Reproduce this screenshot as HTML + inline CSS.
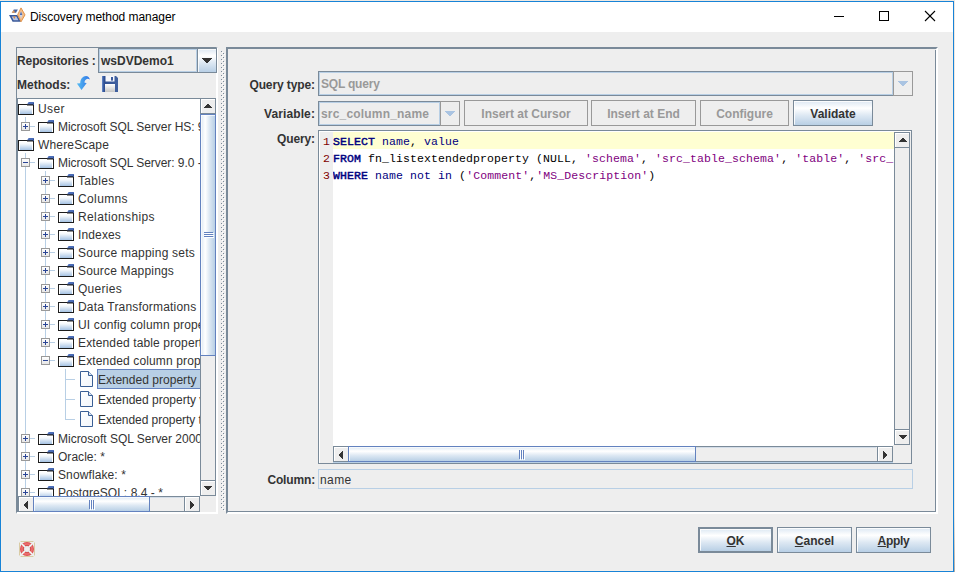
<!DOCTYPE html><html><head><meta charset="utf-8"><title>Discovery method manager</title><style>
*{box-sizing:border-box;margin:0;padding:0}
html,body{width:955px;height:572px;overflow:hidden;background:#eeeeee}
body{position:relative;font-family:"Liberation Sans",sans-serif;font-size:12px;color:#333;line-height:15px}
.a{position:absolute}
.b{font-weight:bold}
.t{position:absolute;white-space:nowrap;height:15px;line-height:15px;margin-top:1px}
.btn{position:absolute;border:1px solid #7a8a99;background:linear-gradient(to bottom,#dde8f3 0%,#ffffff 30%,#dde8f3 60%,#b8cfe5 100%);text-align:center;font-weight:bold;color:#333;white-space:nowrap;padding-top:1px}
.btn.dis{background:#eeeeee;color:#999;border-color:#999}
.btn:after{content:"";position:absolute;left:0;top:0;right:0;bottom:0;border:1px solid #fff;border-right-color:transparent;border-bottom-color:transparent;opacity:.9}
.btn.dis:after{display:none}
.thumbv{position:absolute;border:1px solid #6382bf;background:linear-gradient(to right,#dde8f3 0%,#ffffff 30%,#dde8f3 60%,#b8cfe5 100%)}
.thumbh{position:absolute;border:1px solid #6382bf;background:linear-gradient(to bottom,#dde8f3 0%,#ffffff 30%,#dde8f3 60%,#b8cfe5 100%)}
.row{position:absolute;left:0;white-space:nowrap;height:18px}
.code{font-family:"Liberation Mono",monospace;font-size:11.5px;letter-spacing:0.1px;white-space:pre;position:absolute;height:17px;line-height:17px;color:#000}
.kw{color:#000080;-webkit-text-stroke:0.45px #000080}
.nv{color:#000080}
.st{color:#800080}
</style></head><body>
<div class="a" style="left:0;top:0;width:955px;height:1px;background:#efe9e2"></div>
<div class="a" style="left:954px;top:0;width:1px;height:572px;background:linear-gradient(to bottom,#efe7df 0%,#efe7df 90%,#b4aca4 100%)"></div>
<div class="a" style="left:0;top:1px;width:954px;height:571px;border:1px solid #1883d7;border-top:1px solid #1883d7"></div>
<div class="a" style="left:1px;top:32px;width:1px;height:539px;background:#f5f0ea;"></div>
<div class="a" style="left:952px;top:32px;width:1px;height:539px;background:#f5f0ea;"></div>
<div class="a" style="left:1px;top:570px;width:952px;height:1px;background:#f5f0ea;"></div>
<div class="a" style="left:1px;top:2px;width:952px;height:30px;background:#fff"></div>
<svg class="a" style="left:8px;top:7px" width="18" height="16" viewBox="8 7 18 16">
<polygon points="9,14.9 17.3,14.9 21,21.8 12.6,21.8" fill="#3b5a9a"/>
<polygon points="11.6,16.4 16.4,16.4 18.4,20.3 13.6,20.3" fill="#b4c4e8"/>
<polygon points="13,16.6 15.6,16.6 14.4,19" fill="#e08a3a"/>
<polygon points="13.8,9.6 17.9,9.6 16,12.8 12,12.8" fill="#46629f"/>
<polygon points="11.6,12.8 15,12.8 13.9,9.9" fill="#e59a55"/>
<polygon points="21,7.9 25,14.9 21,21.8 17.6,14.9" fill="#f1bd8c" stroke="#e08a3a" stroke-width="0.9"/>
<polygon points="21,11.6 22.3,14.9 21,18.6 19.8,14.9" fill="#c9d6ef"/>
<polygon points="21,11.6 22.3,14.9 19.8,14.9" fill="#4f6cb0"/>
</svg>
<div class="t" style="left:30px;top:9px;color:#000;font-size:12px;letter-spacing:-0.05px" id="title">Discovery method manager</div>
<svg class="a" style="left:826px;top:8px" width="120" height="18" viewBox="0 0 120 18" shape-rendering="crispEdges">
<rect x="8" y="8" width="10" height="1" fill="#000"/>
<rect x="53.5" y="3.5" width="9" height="9" fill="none" stroke="#000" stroke-width="1"/>
<g shape-rendering="auto" stroke="#000" stroke-width="1.1"><line x1="99" y1="3" x2="109" y2="13"/><line x1="109" y1="3" x2="99" y2="13"/></g>
</svg>
<div class="a" style="left:16px;top:47px;width:202px;height:467px;border-left:1px solid #7a8a99;border-top:1px solid #7a8a99;border-right:2px solid #fff;border-bottom:2px solid #fff"></div>
<div class="t b" style="left:17px;top:53px;letter-spacing:-0.1px">Repositories :</div>
<div class="a" style="left:98px;top:48px;width:119px;height:25px;border:1px solid #7a8a99;background:#eeeeee"></div>
<div class="a" style="left:99px;top:49px;width:98px;height:23px;border:1px solid #b8cfe5"></div>
<div class="a" style="left:197px;top:49px;width:19px;height:23px;border-left:1px solid #7a8a99;background:linear-gradient(to bottom,#dde8f3 0%,#ffffff 30%,#dde8f3 60%,#b8cfe5 100%)"></div>
<div class="a" style="left:198px;top:49px;width:18px;height:23px;border-left:1px solid #fff;border-top:1px solid #fff;opacity:.8"></div>
<div class="t b" style="left:101px;top:53px;color:#333;letter-spacing:0.000px">wsDVDemo1</div>
<svg class="a" style="left:202px;top:58px" width="10" height="5" shape-rendering="crispEdges"><path d="M0,0h10v1h-10zM1,1h8v1h-8zM2,2h6v1h-6zM3,3h4v1h-4zM4,4h2v1h-2z" fill="#333"/></svg>
<div class="t b" style="left:17px;top:77px">Methods:</div>
<svg class="a" style="left:76px;top:75px" width="15" height="16" viewBox="0 0 15 16">
<defs><linearGradient id="ug" x1="0" y1="0" x2="1" y2="0"><stop offset="0" stop-color="#56bdf2"/><stop offset="1" stop-color="#2f74e6"/></linearGradient></defs>
<path d="M0.9,8.5 L4.2,8.2 C4.2,4 7,1 10,1 C12,1 13.5,2.6 13.9,4.6 C12.5,3.6 11,3.6 10,4.4 C8.8,5.4 8.4,6.6 8.6,7.8 L10.7,7.9 L5.5,15.1 Z" fill="url(#ug)"/>
</svg>
<svg class="a" style="left:102px;top:76px" width="16" height="16" viewBox="0 0 16 16">
<defs><linearGradient id="sg" x1="0" y1="0" x2="1" y2="0"><stop offset="0" stop-color="#6b8fd0"/><stop offset="0.12" stop-color="#2f4f92"/><stop offset="1" stop-color="#41619f"/></linearGradient>
<linearGradient id="sl" x1="0" y1="0" x2="0" y2="1"><stop offset="0" stop-color="#ffffff"/><stop offset="1" stop-color="#c4c4c4"/></linearGradient></defs>
<polygon points="0,0 14,0 16,2 16,16 0,16" fill="url(#sg)"/>
<rect x="3.5" y="0" width="9" height="5.5" fill="#f6f7fb"/>
<rect x="9" y="1" width="2" height="3.6" fill="#3a5a9c"/>
<rect x="3" y="8" width="10" height="8" fill="url(#sl)"/>
</svg>
<div class="a" style="left:17px;top:98px;width:199px;height:414px;border:1px solid #7a8a99;background:#fff"></div>
<div class="a" id="tree" style="left:18px;top:99px;width:182px;height:397px;overflow:hidden;background:#fff">
<svg class="a" style="left:0px;top:3px" width="16" height="13" viewBox="0 0 16 13"><defs><linearGradient id="fg1" x1="0" y1="0" x2="0" y2="1"><stop offset="0" stop-color="#ffffff"/><stop offset="0.25" stop-color="#f4f8fc"/><stop offset="1" stop-color="#a6c3e4"/></linearGradient></defs>
<rect x="0.5" y="2.5" width="15" height="10" fill="#fff" stroke="#1c1c1c" stroke-width="1"/>
<rect x="2" y="4" width="12" height="8" fill="url(#fg1)"/>
<polygon points="10.6,0 16,0 16,2.6 9,2.6" fill="#4a6db8"/>
<rect x="9" y="2.6" width="7" height="0.9" fill="#1c1c1c"/>
<rect x="15" y="1" width="1" height="2" fill="#33508f"/>
</svg>
<div class="t" style="left:20px;top:2px;letter-spacing:0.416px">User</div>
<svg class="a" style="left:20px;top:21px" width="16" height="13" viewBox="0 0 16 13"><defs><linearGradient id="fg2" x1="0" y1="0" x2="0" y2="1"><stop offset="0" stop-color="#ffffff"/><stop offset="0.25" stop-color="#f4f8fc"/><stop offset="1" stop-color="#a6c3e4"/></linearGradient></defs>
<rect x="0.5" y="2.5" width="15" height="10" fill="#fff" stroke="#1c1c1c" stroke-width="1"/>
<rect x="2" y="4" width="12" height="8" fill="url(#fg2)"/>
<polygon points="10.6,0 16,0 16,2.6 9,2.6" fill="#4a6db8"/>
<rect x="9" y="2.6" width="7" height="0.9" fill="#1c1c1c"/>
<rect x="15" y="1" width="1" height="2" fill="#33508f"/>
</svg>
<div class="a" style="left:3px;top:23px;width:9px;height:9px;border:1px solid #999;background:linear-gradient(to bottom,#ffffff,#e6e6e6)"></div><div class="a" style="left:5px;top:27px;width:5px;height:1px;background:#2a4596"></div><div class="a" style="left:7px;top:25px;width:1px;height:5px;background:#2a4596"></div>
<div class="a" style="left:12px;top:27px;width:5px;height:1px;background:#b8cfe5"></div>
<div class="t" style="left:40px;top:20px;letter-spacing:-0.043px">Microsoft SQL Server HS: 9.0 - *</div>
<svg class="a" style="left:0px;top:39px" width="16" height="13" viewBox="0 0 16 13"><defs><linearGradient id="fg3" x1="0" y1="0" x2="0" y2="1"><stop offset="0" stop-color="#ffffff"/><stop offset="0.25" stop-color="#f4f8fc"/><stop offset="1" stop-color="#a6c3e4"/></linearGradient></defs>
<rect x="0.5" y="2.5" width="15" height="10" fill="#fff" stroke="#1c1c1c" stroke-width="1"/>
<rect x="2" y="4" width="12" height="8" fill="url(#fg3)"/>
<polygon points="10.6,0 16,0 16,2.6 9,2.6" fill="#4a6db8"/>
<rect x="9" y="2.6" width="7" height="0.9" fill="#1c1c1c"/>
<rect x="15" y="1" width="1" height="2" fill="#33508f"/>
</svg>
<div class="t" style="left:20px;top:38px;letter-spacing:0.163px">WhereScape</div>
<svg class="a" style="left:20px;top:57px" width="16" height="13" viewBox="0 0 16 13"><defs><linearGradient id="fg4" x1="0" y1="0" x2="0" y2="1"><stop offset="0" stop-color="#ffffff"/><stop offset="0.25" stop-color="#f4f8fc"/><stop offset="1" stop-color="#a6c3e4"/></linearGradient></defs>
<rect x="0.5" y="2.5" width="15" height="10" fill="#fff" stroke="#1c1c1c" stroke-width="1"/>
<rect x="2" y="4" width="12" height="8" fill="url(#fg4)"/>
<polygon points="10.6,0 16,0 16,2.6 9,2.6" fill="#4a6db8"/>
<rect x="9" y="2.6" width="7" height="0.9" fill="#1c1c1c"/>
<rect x="15" y="1" width="1" height="2" fill="#33508f"/>
</svg>
<div class="a" style="left:3px;top:59px;width:9px;height:9px;border:1px solid #999;background:linear-gradient(to bottom,#ffffff,#e6e6e6)"></div><div class="a" style="left:5px;top:63px;width:5px;height:1px;background:#2a4596"></div>
<div class="a" style="left:12px;top:63px;width:5px;height:1px;background:#b8cfe5"></div>
<div class="t" style="left:40px;top:56px;letter-spacing:-0.048px">Microsoft SQL Server: 9.0 - *</div>
<svg class="a" style="left:40px;top:75px" width="16" height="13" viewBox="0 0 16 13"><defs><linearGradient id="fg5" x1="0" y1="0" x2="0" y2="1"><stop offset="0" stop-color="#ffffff"/><stop offset="0.25" stop-color="#f4f8fc"/><stop offset="1" stop-color="#a6c3e4"/></linearGradient></defs>
<rect x="0.5" y="2.5" width="15" height="10" fill="#fff" stroke="#1c1c1c" stroke-width="1"/>
<rect x="2" y="4" width="12" height="8" fill="url(#fg5)"/>
<polygon points="10.6,0 16,0 16,2.6 9,2.6" fill="#4a6db8"/>
<rect x="9" y="2.6" width="7" height="0.9" fill="#1c1c1c"/>
<rect x="15" y="1" width="1" height="2" fill="#33508f"/>
</svg>
<div class="a" style="left:23px;top:77px;width:9px;height:9px;border:1px solid #999;background:linear-gradient(to bottom,#ffffff,#e6e6e6)"></div><div class="a" style="left:25px;top:81px;width:5px;height:1px;background:#2a4596"></div><div class="a" style="left:27px;top:79px;width:1px;height:5px;background:#2a4596"></div>
<div class="a" style="left:32px;top:81px;width:5px;height:1px;background:#b8cfe5"></div>
<div class="t" style="left:60px;top:74px;letter-spacing:0.330px">Tables</div>
<svg class="a" style="left:40px;top:93px" width="16" height="13" viewBox="0 0 16 13"><defs><linearGradient id="fg6" x1="0" y1="0" x2="0" y2="1"><stop offset="0" stop-color="#ffffff"/><stop offset="0.25" stop-color="#f4f8fc"/><stop offset="1" stop-color="#a6c3e4"/></linearGradient></defs>
<rect x="0.5" y="2.5" width="15" height="10" fill="#fff" stroke="#1c1c1c" stroke-width="1"/>
<rect x="2" y="4" width="12" height="8" fill="url(#fg6)"/>
<polygon points="10.6,0 16,0 16,2.6 9,2.6" fill="#4a6db8"/>
<rect x="9" y="2.6" width="7" height="0.9" fill="#1c1c1c"/>
<rect x="15" y="1" width="1" height="2" fill="#33508f"/>
</svg>
<div class="a" style="left:23px;top:95px;width:9px;height:9px;border:1px solid #999;background:linear-gradient(to bottom,#ffffff,#e6e6e6)"></div><div class="a" style="left:25px;top:99px;width:5px;height:1px;background:#2a4596"></div><div class="a" style="left:27px;top:97px;width:1px;height:5px;background:#2a4596"></div>
<div class="a" style="left:32px;top:99px;width:5px;height:1px;background:#b8cfe5"></div>
<div class="t" style="left:60px;top:92px;letter-spacing:0.379px">Columns</div>
<svg class="a" style="left:40px;top:111px" width="16" height="13" viewBox="0 0 16 13"><defs><linearGradient id="fg7" x1="0" y1="0" x2="0" y2="1"><stop offset="0" stop-color="#ffffff"/><stop offset="0.25" stop-color="#f4f8fc"/><stop offset="1" stop-color="#a6c3e4"/></linearGradient></defs>
<rect x="0.5" y="2.5" width="15" height="10" fill="#fff" stroke="#1c1c1c" stroke-width="1"/>
<rect x="2" y="4" width="12" height="8" fill="url(#fg7)"/>
<polygon points="10.6,0 16,0 16,2.6 9,2.6" fill="#4a6db8"/>
<rect x="9" y="2.6" width="7" height="0.9" fill="#1c1c1c"/>
<rect x="15" y="1" width="1" height="2" fill="#33508f"/>
</svg>
<div class="a" style="left:23px;top:113px;width:9px;height:9px;border:1px solid #999;background:linear-gradient(to bottom,#ffffff,#e6e6e6)"></div><div class="a" style="left:25px;top:117px;width:5px;height:1px;background:#2a4596"></div><div class="a" style="left:27px;top:115px;width:1px;height:5px;background:#2a4596"></div>
<div class="a" style="left:32px;top:117px;width:5px;height:1px;background:#b8cfe5"></div>
<div class="t" style="left:60px;top:110px;letter-spacing:0.381px">Relationships</div>
<svg class="a" style="left:40px;top:129px" width="16" height="13" viewBox="0 0 16 13"><defs><linearGradient id="fg8" x1="0" y1="0" x2="0" y2="1"><stop offset="0" stop-color="#ffffff"/><stop offset="0.25" stop-color="#f4f8fc"/><stop offset="1" stop-color="#a6c3e4"/></linearGradient></defs>
<rect x="0.5" y="2.5" width="15" height="10" fill="#fff" stroke="#1c1c1c" stroke-width="1"/>
<rect x="2" y="4" width="12" height="8" fill="url(#fg8)"/>
<polygon points="10.6,0 16,0 16,2.6 9,2.6" fill="#4a6db8"/>
<rect x="9" y="2.6" width="7" height="0.9" fill="#1c1c1c"/>
<rect x="15" y="1" width="1" height="2" fill="#33508f"/>
</svg>
<div class="a" style="left:23px;top:131px;width:9px;height:9px;border:1px solid #999;background:linear-gradient(to bottom,#ffffff,#e6e6e6)"></div><div class="a" style="left:25px;top:135px;width:5px;height:1px;background:#2a4596"></div><div class="a" style="left:27px;top:133px;width:1px;height:5px;background:#2a4596"></div>
<div class="a" style="left:32px;top:135px;width:5px;height:1px;background:#b8cfe5"></div>
<div class="t" style="left:60px;top:128px;letter-spacing:0.139px">Indexes</div>
<svg class="a" style="left:40px;top:147px" width="16" height="13" viewBox="0 0 16 13"><defs><linearGradient id="fg9" x1="0" y1="0" x2="0" y2="1"><stop offset="0" stop-color="#ffffff"/><stop offset="0.25" stop-color="#f4f8fc"/><stop offset="1" stop-color="#a6c3e4"/></linearGradient></defs>
<rect x="0.5" y="2.5" width="15" height="10" fill="#fff" stroke="#1c1c1c" stroke-width="1"/>
<rect x="2" y="4" width="12" height="8" fill="url(#fg9)"/>
<polygon points="10.6,0 16,0 16,2.6 9,2.6" fill="#4a6db8"/>
<rect x="9" y="2.6" width="7" height="0.9" fill="#1c1c1c"/>
<rect x="15" y="1" width="1" height="2" fill="#33508f"/>
</svg>
<div class="a" style="left:23px;top:149px;width:9px;height:9px;border:1px solid #999;background:linear-gradient(to bottom,#ffffff,#e6e6e6)"></div><div class="a" style="left:25px;top:153px;width:5px;height:1px;background:#2a4596"></div><div class="a" style="left:27px;top:151px;width:1px;height:5px;background:#2a4596"></div>
<div class="a" style="left:32px;top:153px;width:5px;height:1px;background:#b8cfe5"></div>
<div class="t" style="left:60px;top:146px;letter-spacing:0.225px">Source mapping sets</div>
<svg class="a" style="left:40px;top:165px" width="16" height="13" viewBox="0 0 16 13"><defs><linearGradient id="fg10" x1="0" y1="0" x2="0" y2="1"><stop offset="0" stop-color="#ffffff"/><stop offset="0.25" stop-color="#f4f8fc"/><stop offset="1" stop-color="#a6c3e4"/></linearGradient></defs>
<rect x="0.5" y="2.5" width="15" height="10" fill="#fff" stroke="#1c1c1c" stroke-width="1"/>
<rect x="2" y="4" width="12" height="8" fill="url(#fg10)"/>
<polygon points="10.6,0 16,0 16,2.6 9,2.6" fill="#4a6db8"/>
<rect x="9" y="2.6" width="7" height="0.9" fill="#1c1c1c"/>
<rect x="15" y="1" width="1" height="2" fill="#33508f"/>
</svg>
<div class="a" style="left:23px;top:167px;width:9px;height:9px;border:1px solid #999;background:linear-gradient(to bottom,#ffffff,#e6e6e6)"></div><div class="a" style="left:25px;top:171px;width:5px;height:1px;background:#2a4596"></div><div class="a" style="left:27px;top:169px;width:1px;height:5px;background:#2a4596"></div>
<div class="a" style="left:32px;top:171px;width:5px;height:1px;background:#b8cfe5"></div>
<div class="t" style="left:60px;top:164px;letter-spacing:0.174px">Source Mappings</div>
<svg class="a" style="left:40px;top:183px" width="16" height="13" viewBox="0 0 16 13"><defs><linearGradient id="fg11" x1="0" y1="0" x2="0" y2="1"><stop offset="0" stop-color="#ffffff"/><stop offset="0.25" stop-color="#f4f8fc"/><stop offset="1" stop-color="#a6c3e4"/></linearGradient></defs>
<rect x="0.5" y="2.5" width="15" height="10" fill="#fff" stroke="#1c1c1c" stroke-width="1"/>
<rect x="2" y="4" width="12" height="8" fill="url(#fg11)"/>
<polygon points="10.6,0 16,0 16,2.6 9,2.6" fill="#4a6db8"/>
<rect x="9" y="2.6" width="7" height="0.9" fill="#1c1c1c"/>
<rect x="15" y="1" width="1" height="2" fill="#33508f"/>
</svg>
<div class="a" style="left:23px;top:185px;width:9px;height:9px;border:1px solid #999;background:linear-gradient(to bottom,#ffffff,#e6e6e6)"></div><div class="a" style="left:25px;top:189px;width:5px;height:1px;background:#2a4596"></div><div class="a" style="left:27px;top:187px;width:1px;height:5px;background:#2a4596"></div>
<div class="a" style="left:32px;top:189px;width:5px;height:1px;background:#b8cfe5"></div>
<div class="t" style="left:60px;top:182px;letter-spacing:0.283px">Queries</div>
<svg class="a" style="left:40px;top:201px" width="16" height="13" viewBox="0 0 16 13"><defs><linearGradient id="fg12" x1="0" y1="0" x2="0" y2="1"><stop offset="0" stop-color="#ffffff"/><stop offset="0.25" stop-color="#f4f8fc"/><stop offset="1" stop-color="#a6c3e4"/></linearGradient></defs>
<rect x="0.5" y="2.5" width="15" height="10" fill="#fff" stroke="#1c1c1c" stroke-width="1"/>
<rect x="2" y="4" width="12" height="8" fill="url(#fg12)"/>
<polygon points="10.6,0 16,0 16,2.6 9,2.6" fill="#4a6db8"/>
<rect x="9" y="2.6" width="7" height="0.9" fill="#1c1c1c"/>
<rect x="15" y="1" width="1" height="2" fill="#33508f"/>
</svg>
<div class="a" style="left:23px;top:203px;width:9px;height:9px;border:1px solid #999;background:linear-gradient(to bottom,#ffffff,#e6e6e6)"></div><div class="a" style="left:25px;top:207px;width:5px;height:1px;background:#2a4596"></div><div class="a" style="left:27px;top:205px;width:1px;height:5px;background:#2a4596"></div>
<div class="a" style="left:32px;top:207px;width:5px;height:1px;background:#b8cfe5"></div>
<div class="t" style="left:60px;top:200px;letter-spacing:0.181px">Data Transformations</div>
<svg class="a" style="left:40px;top:219px" width="16" height="13" viewBox="0 0 16 13"><defs><linearGradient id="fg13" x1="0" y1="0" x2="0" y2="1"><stop offset="0" stop-color="#ffffff"/><stop offset="0.25" stop-color="#f4f8fc"/><stop offset="1" stop-color="#a6c3e4"/></linearGradient></defs>
<rect x="0.5" y="2.5" width="15" height="10" fill="#fff" stroke="#1c1c1c" stroke-width="1"/>
<rect x="2" y="4" width="12" height="8" fill="url(#fg13)"/>
<polygon points="10.6,0 16,0 16,2.6 9,2.6" fill="#4a6db8"/>
<rect x="9" y="2.6" width="7" height="0.9" fill="#1c1c1c"/>
<rect x="15" y="1" width="1" height="2" fill="#33508f"/>
</svg>
<div class="a" style="left:23px;top:221px;width:9px;height:9px;border:1px solid #999;background:linear-gradient(to bottom,#ffffff,#e6e6e6)"></div><div class="a" style="left:25px;top:225px;width:5px;height:1px;background:#2a4596"></div><div class="a" style="left:27px;top:223px;width:1px;height:5px;background:#2a4596"></div>
<div class="a" style="left:32px;top:225px;width:5px;height:1px;background:#b8cfe5"></div>
<div class="t" style="left:60px;top:218px;letter-spacing:0.146px">UI config column properties</div>
<svg class="a" style="left:40px;top:237px" width="16" height="13" viewBox="0 0 16 13"><defs><linearGradient id="fg14" x1="0" y1="0" x2="0" y2="1"><stop offset="0" stop-color="#ffffff"/><stop offset="0.25" stop-color="#f4f8fc"/><stop offset="1" stop-color="#a6c3e4"/></linearGradient></defs>
<rect x="0.5" y="2.5" width="15" height="10" fill="#fff" stroke="#1c1c1c" stroke-width="1"/>
<rect x="2" y="4" width="12" height="8" fill="url(#fg14)"/>
<polygon points="10.6,0 16,0 16,2.6 9,2.6" fill="#4a6db8"/>
<rect x="9" y="2.6" width="7" height="0.9" fill="#1c1c1c"/>
<rect x="15" y="1" width="1" height="2" fill="#33508f"/>
</svg>
<div class="a" style="left:23px;top:239px;width:9px;height:9px;border:1px solid #999;background:linear-gradient(to bottom,#ffffff,#e6e6e6)"></div><div class="a" style="left:25px;top:243px;width:5px;height:1px;background:#2a4596"></div><div class="a" style="left:27px;top:241px;width:1px;height:5px;background:#2a4596"></div>
<div class="a" style="left:32px;top:243px;width:5px;height:1px;background:#b8cfe5"></div>
<div class="t" style="left:60px;top:236px;letter-spacing:0.130px">Extended table properties</div>
<svg class="a" style="left:40px;top:255px" width="16" height="13" viewBox="0 0 16 13"><defs><linearGradient id="fg15" x1="0" y1="0" x2="0" y2="1"><stop offset="0" stop-color="#ffffff"/><stop offset="0.25" stop-color="#f4f8fc"/><stop offset="1" stop-color="#a6c3e4"/></linearGradient></defs>
<rect x="0.5" y="2.5" width="15" height="10" fill="#fff" stroke="#1c1c1c" stroke-width="1"/>
<rect x="2" y="4" width="12" height="8" fill="url(#fg15)"/>
<polygon points="10.6,0 16,0 16,2.6 9,2.6" fill="#4a6db8"/>
<rect x="9" y="2.6" width="7" height="0.9" fill="#1c1c1c"/>
<rect x="15" y="1" width="1" height="2" fill="#33508f"/>
</svg>
<div class="a" style="left:23px;top:257px;width:9px;height:9px;border:1px solid #999;background:linear-gradient(to bottom,#ffffff,#e6e6e6)"></div><div class="a" style="left:25px;top:261px;width:5px;height:1px;background:#2a4596"></div>
<div class="a" style="left:32px;top:261px;width:5px;height:1px;background:#b8cfe5"></div>
<div class="t" style="left:60px;top:254px;letter-spacing:0.138px">Extended column properties</div>
<svg class="a" style="left:62px;top:272px" width="13" height="16" viewBox="0 0 13 16"><defs><linearGradient id="fl16" x1="0" y1="0" x2="1" y2="1"><stop offset="0" stop-color="#ffffff"/><stop offset="1" stop-color="#f2f6fb"/></linearGradient></defs>
<path d="M0.5,0.5 L8.5,0.5 L12.5,4.5 L12.5,15.5 L0.5,15.5 Z" fill="url(#fl16)" stroke="#3a5f95" stroke-width="1"/>
<path d="M8.5,0.5 L8.5,4.5 L12.5,4.5" fill="#dbe6f3" stroke="#3a5f95" stroke-width="1"/>
</svg>
<div class="a" style="left:47px;top:280px;width:10px;height:1px;background:#b8cfe5"></div>
<div class="a" style="left:79px;top:270px;width:140px;height:20px;background:#b8cfe5;border:1px solid #6382bf"></div>
<div class="t" style="left:80px;top:273px;letter-spacing:0.027px">Extended property name</div>
<svg class="a" style="left:62px;top:292px" width="13" height="16" viewBox="0 0 13 16"><defs><linearGradient id="fl17" x1="0" y1="0" x2="1" y2="1"><stop offset="0" stop-color="#ffffff"/><stop offset="1" stop-color="#f2f6fb"/></linearGradient></defs>
<path d="M0.5,0.5 L8.5,0.5 L12.5,4.5 L12.5,15.5 L0.5,15.5 Z" fill="url(#fl17)" stroke="#3a5f95" stroke-width="1"/>
<path d="M8.5,0.5 L8.5,4.5 L12.5,4.5" fill="#dbe6f3" stroke="#3a5f95" stroke-width="1"/>
</svg>
<div class="a" style="left:47px;top:300px;width:10px;height:1px;background:#b8cfe5"></div>
<div class="t" style="left:80px;top:293px;letter-spacing:-0.004px">Extended property value</div>
<svg class="a" style="left:62px;top:312px" width="13" height="16" viewBox="0 0 13 16"><defs><linearGradient id="fl18" x1="0" y1="0" x2="1" y2="1"><stop offset="0" stop-color="#ffffff"/><stop offset="1" stop-color="#f2f6fb"/></linearGradient></defs>
<path d="M0.5,0.5 L8.5,0.5 L12.5,4.5 L12.5,15.5 L0.5,15.5 Z" fill="url(#fl18)" stroke="#3a5f95" stroke-width="1"/>
<path d="M8.5,0.5 L8.5,4.5 L12.5,4.5" fill="#dbe6f3" stroke="#3a5f95" stroke-width="1"/>
</svg>
<div class="a" style="left:47px;top:320px;width:10px;height:1px;background:#b8cfe5"></div>
<div class="t" style="left:80px;top:313px;letter-spacing:-0.049px">Extended property type</div>
<svg class="a" style="left:20px;top:333px" width="16" height="13" viewBox="0 0 16 13"><defs><linearGradient id="fg19" x1="0" y1="0" x2="0" y2="1"><stop offset="0" stop-color="#ffffff"/><stop offset="0.25" stop-color="#f4f8fc"/><stop offset="1" stop-color="#a6c3e4"/></linearGradient></defs>
<rect x="0.5" y="2.5" width="15" height="10" fill="#fff" stroke="#1c1c1c" stroke-width="1"/>
<rect x="2" y="4" width="12" height="8" fill="url(#fg19)"/>
<polygon points="10.6,0 16,0 16,2.6 9,2.6" fill="#4a6db8"/>
<rect x="9" y="2.6" width="7" height="0.9" fill="#1c1c1c"/>
<rect x="15" y="1" width="1" height="2" fill="#33508f"/>
</svg>
<div class="a" style="left:3px;top:335px;width:9px;height:9px;border:1px solid #999;background:linear-gradient(to bottom,#ffffff,#e6e6e6)"></div><div class="a" style="left:5px;top:339px;width:5px;height:1px;background:#2a4596"></div><div class="a" style="left:7px;top:337px;width:1px;height:5px;background:#2a4596"></div>
<div class="a" style="left:12px;top:339px;width:5px;height:1px;background:#b8cfe5"></div>
<div class="t" style="left:40px;top:332px;letter-spacing:-0.012px">Microsoft SQL Server 2000: 8.0 - 8.*</div>
<svg class="a" style="left:20px;top:351px" width="16" height="13" viewBox="0 0 16 13"><defs><linearGradient id="fg20" x1="0" y1="0" x2="0" y2="1"><stop offset="0" stop-color="#ffffff"/><stop offset="0.25" stop-color="#f4f8fc"/><stop offset="1" stop-color="#a6c3e4"/></linearGradient></defs>
<rect x="0.5" y="2.5" width="15" height="10" fill="#fff" stroke="#1c1c1c" stroke-width="1"/>
<rect x="2" y="4" width="12" height="8" fill="url(#fg20)"/>
<polygon points="10.6,0 16,0 16,2.6 9,2.6" fill="#4a6db8"/>
<rect x="9" y="2.6" width="7" height="0.9" fill="#1c1c1c"/>
<rect x="15" y="1" width="1" height="2" fill="#33508f"/>
</svg>
<div class="a" style="left:3px;top:353px;width:9px;height:9px;border:1px solid #999;background:linear-gradient(to bottom,#ffffff,#e6e6e6)"></div><div class="a" style="left:5px;top:357px;width:5px;height:1px;background:#2a4596"></div><div class="a" style="left:7px;top:355px;width:1px;height:5px;background:#2a4596"></div>
<div class="a" style="left:12px;top:357px;width:5px;height:1px;background:#b8cfe5"></div>
<div class="t" style="left:40px;top:350px;letter-spacing:0.035px">Oracle: *</div>
<svg class="a" style="left:20px;top:369px" width="16" height="13" viewBox="0 0 16 13"><defs><linearGradient id="fg21" x1="0" y1="0" x2="0" y2="1"><stop offset="0" stop-color="#ffffff"/><stop offset="0.25" stop-color="#f4f8fc"/><stop offset="1" stop-color="#a6c3e4"/></linearGradient></defs>
<rect x="0.5" y="2.5" width="15" height="10" fill="#fff" stroke="#1c1c1c" stroke-width="1"/>
<rect x="2" y="4" width="12" height="8" fill="url(#fg21)"/>
<polygon points="10.6,0 16,0 16,2.6 9,2.6" fill="#4a6db8"/>
<rect x="9" y="2.6" width="7" height="0.9" fill="#1c1c1c"/>
<rect x="15" y="1" width="1" height="2" fill="#33508f"/>
</svg>
<div class="a" style="left:3px;top:371px;width:9px;height:9px;border:1px solid #999;background:linear-gradient(to bottom,#ffffff,#e6e6e6)"></div><div class="a" style="left:5px;top:375px;width:5px;height:1px;background:#2a4596"></div><div class="a" style="left:7px;top:373px;width:1px;height:5px;background:#2a4596"></div>
<div class="a" style="left:12px;top:375px;width:5px;height:1px;background:#b8cfe5"></div>
<div class="t" style="left:40px;top:368px;letter-spacing:0.108px">Snowflake: *</div>
<svg class="a" style="left:20px;top:387px" width="16" height="13" viewBox="0 0 16 13"><defs><linearGradient id="fg22" x1="0" y1="0" x2="0" y2="1"><stop offset="0" stop-color="#ffffff"/><stop offset="0.25" stop-color="#f4f8fc"/><stop offset="1" stop-color="#a6c3e4"/></linearGradient></defs>
<rect x="0.5" y="2.5" width="15" height="10" fill="#fff" stroke="#1c1c1c" stroke-width="1"/>
<rect x="2" y="4" width="12" height="8" fill="url(#fg22)"/>
<polygon points="10.6,0 16,0 16,2.6 9,2.6" fill="#4a6db8"/>
<rect x="9" y="2.6" width="7" height="0.9" fill="#1c1c1c"/>
<rect x="15" y="1" width="1" height="2" fill="#33508f"/>
</svg>
<div class="a" style="left:3px;top:389px;width:9px;height:9px;border:1px solid #999;background:linear-gradient(to bottom,#ffffff,#e6e6e6)"></div><div class="a" style="left:5px;top:393px;width:5px;height:1px;background:#2a4596"></div><div class="a" style="left:7px;top:391px;width:1px;height:5px;background:#2a4596"></div>
<div class="a" style="left:12px;top:393px;width:5px;height:1px;background:#b8cfe5"></div>
<div class="t" style="left:40px;top:386px;letter-spacing:0.050px">PostgreSQL: 8.4 - *</div>
<div class="a" style="left:7px;top:18px;width:1px;height:5px;background:#b8cfe5"></div>
<div class="a" style="left:7px;top:54px;width:1px;height:5px;background:#b8cfe5"></div>
<div class="a" style="left:7px;top:68px;width:1px;height:267px;background:#b8cfe5"></div>
<div class="a" style="left:7px;top:344px;width:1px;height:9px;background:#b8cfe5"></div>
<div class="a" style="left:7px;top:362px;width:1px;height:9px;background:#b8cfe5"></div>
<div class="a" style="left:7px;top:380px;width:1px;height:9px;background:#b8cfe5"></div>
<div class="a" style="left:27px;top:72px;width:1px;height:5px;background:#b8cfe5"></div>
<div class="a" style="left:27px;top:86px;width:1px;height:9px;background:#b8cfe5"></div>
<div class="a" style="left:27px;top:104px;width:1px;height:9px;background:#b8cfe5"></div>
<div class="a" style="left:27px;top:122px;width:1px;height:9px;background:#b8cfe5"></div>
<div class="a" style="left:27px;top:140px;width:1px;height:9px;background:#b8cfe5"></div>
<div class="a" style="left:27px;top:158px;width:1px;height:9px;background:#b8cfe5"></div>
<div class="a" style="left:27px;top:176px;width:1px;height:9px;background:#b8cfe5"></div>
<div class="a" style="left:27px;top:194px;width:1px;height:9px;background:#b8cfe5"></div>
<div class="a" style="left:27px;top:212px;width:1px;height:9px;background:#b8cfe5"></div>
<div class="a" style="left:27px;top:230px;width:1px;height:9px;background:#b8cfe5"></div>
<div class="a" style="left:27px;top:248px;width:1px;height:9px;background:#b8cfe5"></div>
<div class="a" style="left:47px;top:270px;width:1px;height:51px;background:#b8cfe5"></div>
</div>
<div class="a" style="left:200px;top:496px;width:16px;height:16px;background:#eeeeee;"></div>
<div class="a" style="left:200px;top:98px;width:16px;height:398px;background:#eeeeee;"></div>
<div class="a" style="left:200px;top:98px;width:1px;height:398px;background:#7a8a99;"></div>
<div class="a" style="left:215px;top:98px;width:1px;height:398px;background:#7a8a99;"></div>
<div class="a" style="left:200px;top:98px;width:16px;height:1px;background:#7a8a99;"></div>
<div class="a" style="left:200px;top:113px;width:16px;height:1px;background:#7a8a99;"></div>
<div class="a" style="left:201px;top:99px;width:14px;height:1px;background:#fff;"></div>
<div class="a" style="left:201px;top:99px;width:1px;height:14px;background:#fff;"></div>
<svg class="a" style="left:204px;top:104px" width="8" height="4" shape-rendering="crispEdges"><path d="M3,0h2v1h-2zM2,1h4v1h-4zM1,2h6v1h-6zM0,3h8v1h-8z" fill="#333"/></svg>
<div class="a" style="left:200px;top:480px;width:16px;height:1px;background:#7a8a99;"></div>
<div class="a" style="left:200px;top:495px;width:16px;height:1px;background:#7a8a99;"></div>
<div class="a" style="left:201px;top:481px;width:14px;height:1px;background:#fff;"></div>
<div class="a" style="left:201px;top:481px;width:1px;height:14px;background:#fff;"></div>
<svg class="a" style="left:204px;top:486px" width="8" height="4" shape-rendering="crispEdges"><path d="M0,0h8v1h-8zM1,1h6v1h-6zM2,2h4v1h-4zM3,3h2v1h-2z" fill="#333"/></svg>
<div class="a" style="left:200px;top:114px;width:16px;height:242px;border:1px solid #6382bf;background:linear-gradient(to right,#dde8f3 0%,#ffffff 30%,#dde8f3 60%,#b8cfe5 100%)"></div>
<div class="a" style="left:201px;top:115px;width:14px;height:1px;background:#fff;opacity:.7"></div>
<div class="a" style="left:201px;top:115px;width:1px;height:240px;background:#fff;opacity:.7"></div>
<div class="a" style="left:204px;top:232px;width:9px;height:1px;background:#6382bf;"></div>
<div class="a" style="left:205px;top:233px;width:9px;height:1px;background:#fff;"></div>
<div class="a" style="left:204px;top:234px;width:9px;height:1px;background:#6382bf;"></div>
<div class="a" style="left:205px;top:235px;width:9px;height:1px;background:#fff;"></div>
<div class="a" style="left:204px;top:236px;width:9px;height:1px;background:#6382bf;"></div>
<div class="a" style="left:205px;top:237px;width:9px;height:1px;background:#fff;"></div>
<div class="a" style="left:18px;top:496px;width:182px;height:16px;background:#eeeeee;"></div>
<div class="a" style="left:18px;top:496px;width:182px;height:1px;background:#7a8a99;"></div>
<div class="a" style="left:18px;top:511px;width:182px;height:1px;background:#7a8a99;"></div>
<div class="a" style="left:34px;top:497px;width:149px;height:1px;background:#d3dde8;"></div>
<div class="a" style="left:18px;top:496px;width:1px;height:16px;background:#7a8a99;"></div>
<div class="a" style="left:33px;top:496px;width:1px;height:16px;background:#7a8a99;"></div>
<div class="a" style="left:19px;top:497px;width:14px;height:1px;background:#fff;"></div>
<div class="a" style="left:19px;top:497px;width:1px;height:14px;background:#fff;"></div>
<svg class="a" style="left:24px;top:501px" width="4" height="8" shape-rendering="crispEdges"><path d="M3,0h1v8h-1zM2,1h1v6h-1zM1,2h1v4h-1zM0,3h1v2h-1z" fill="#333"/></svg>
<div class="a" style="left:184px;top:496px;width:1px;height:16px;background:#7a8a99;"></div>
<div class="a" style="left:199px;top:496px;width:1px;height:16px;background:#7a8a99;"></div>
<div class="a" style="left:185px;top:497px;width:14px;height:1px;background:#fff;"></div>
<div class="a" style="left:185px;top:497px;width:1px;height:14px;background:#fff;"></div>
<svg class="a" style="left:190px;top:501px" width="4" height="8" shape-rendering="crispEdges"><path d="M0,0h1v8h-1zM1,1h1v6h-1zM2,2h1v4h-1zM3,3h1v2h-1z" fill="#333"/></svg>
<div class="a" style="left:33px;top:496px;width:117px;height:16px;border:1px solid #6382bf;background:linear-gradient(to bottom,#dde8f3 0%,#ffffff 30%,#dde8f3 60%,#b8cfe5 100%)"></div>
<div class="a" style="left:34px;top:497px;width:115px;height:1px;background:#fff;opacity:.7"></div>
<div class="a" style="left:34px;top:497px;width:1px;height:14px;background:#fff;opacity:.7"></div>
<div class="a" style="left:89px;top:500px;width:1px;height:9px;background:#6382bf;"></div>
<div class="a" style="left:90px;top:501px;width:1px;height:9px;background:#fff;"></div>
<div class="a" style="left:91px;top:500px;width:1px;height:9px;background:#6382bf;"></div>
<div class="a" style="left:92px;top:501px;width:1px;height:9px;background:#fff;"></div>
<div class="a" style="left:93px;top:500px;width:1px;height:9px;background:#6382bf;"></div>
<div class="a" style="left:94px;top:501px;width:1px;height:9px;background:#fff;"></div>
<div class="a" style="left:17px;top:496px;width:1px;height:16px;background:#7a8a99;"></div>
<svg class="a" style="left:221px;top:51px" width="4" height="460" shape-rendering="crispEdges"><defs><pattern id="bp" width="4" height="4" patternUnits="userSpaceOnUse"><rect x="0" y="0" width="1" height="1" fill="#7a8a99"/><rect x="2" y="2" width="1" height="1" fill="#7a8a99"/><rect x="1" y="1" width="1" height="1" fill="#fff"/><rect x="3" y="3" width="1" height="1" fill="#fff"/></pattern></defs><rect width="4" height="460" fill="url(#bp)"/></svg>
<div class="a" style="left:226px;top:47px;width:712px;height:467px;border-left:2px solid #7a8a99;border-top:2px solid #7a8a99;border-right:2px solid #fff;border-bottom:2px solid #fff"></div>
<div class="a" style="left:228px;top:511px;width:708px;height:1px;background:#7a8a99"></div>
<div class="a" style="left:935px;top:50px;width:1px;height:462px;background:#7a8a99"></div>
<div class="t b" style="left:215px;width:100px;text-align:right;top:77px;letter-spacing:-0.1px">Query type:</div>
<div class="t b" style="left:215px;width:100px;text-align:right;top:106px;letter-spacing:0.1px">Variable:</div>
<div class="t b" style="left:215px;width:100px;text-align:right;top:131px;letter-spacing:-0.1px">Query:</div>
<div class="t b" style="left:215px;width:100px;text-align:right;top:472px;letter-spacing:-0.15px">Column:</div>
<div class="a" style="left:318px;top:71px;width:575px;height:25px;border:1px solid #7a8a99;border-right:none;background:#eeeeee"></div>
<div class="a" style="left:319px;top:72px;width:574px;height:23px;border:1px solid #b8cfe5"></div>
<div class="a" style="left:893px;top:71px;width:20px;height:25px;border:1px solid #999"></div>
<div class="t b" style="left:321px;top:76px;color:#999;letter-spacing:-0.200px">SQL query</div>
<svg class="a" style="left:898px;top:81px" width="10" height="5" shape-rendering="crispEdges"><path d="M0,0h10v1h-10zM1,1h8v1h-8zM2,2h6v1h-6zM3,3h4v1h-4zM4,4h2v1h-2z" fill="#aac4e2"/></svg>
<div class="a" style="left:318px;top:101px;width:122px;height:25px;border:1px solid #7a8a99;border-right:none;background:#eeeeee"></div>
<div class="a" style="left:319px;top:102px;width:121px;height:23px;border:1px solid #b8cfe5"></div>
<div class="a" style="left:440px;top:101px;width:20px;height:25px;border:1px solid #999"></div>
<div class="t b" style="left:321px;top:106px;color:#999;letter-spacing:0.180px">src_column_name</div>
<svg class="a" style="left:445px;top:111px" width="10" height="5" shape-rendering="crispEdges"><path d="M0,0h10v1h-10zM1,1h8v1h-8zM2,2h6v1h-6zM3,3h4v1h-4zM4,4h2v1h-2z" fill="#aac4e2"/></svg>
<div class="btn dis" style="left:464px;top:100px;width:124px;height:26px;line-height:24px;">Insert at Cursor</div>
<div class="btn dis" style="left:591px;top:100px;width:105px;height:26px;line-height:24px;">Insert at End</div>
<div class="btn dis" style="left:700px;top:100px;width:89px;height:26px;line-height:24px;">Configure</div>
<div class="btn" style="left:793px;top:100px;width:80px;height:26px;line-height:24px;">Validate</div>
<div class="a" style="left:318px;top:130px;width:594px;height:334px;border:1px solid #7a8a99;background:#fff"></div>
<div class="a" style="left:320px;top:132px;width:13px;height:331px;background:#eeeeee;"></div>
<div class="a" style="left:333px;top:132px;width:561px;height:17px;background:#ffffd2;"></div>
<div class="a" style="left:333px;top:131px;width:561px;height:315px;overflow:hidden">
<div class="code" style="left:0px;top:2px"><span class="kw">SELECT</span> <span class="nv">name</span>, <span class="nv">value</span></div>
<div class="code" style="left:0px;top:19px"><span class="kw">FROM</span> fn_listextendedproperty (NULL, <span class="st">'schema'</span>, <span class="st">'src_table_schema'</span>, <span class="st">'table'</span>, <span class="st">'src_table_name'</span>, <span class="st">'column'</span>, <span class="st">'src_column_name'</span>)</div>
<div class="code" style="left:0px;top:36px"><span class="kw">WHERE</span> <span class="nv">name</span> <span class="nv">not</span> <span class="nv">in</span> (<span class="st">'Comment'</span>,<span class="st">'MS_Description'</span>)</div>
</div>
<div class="code" style="left:323px;top:133px;color:#800000">1</div>
<div class="code" style="left:323px;top:150px;color:#800000">2</div>
<div class="code" style="left:323px;top:167px;color:#800000">3</div>
<div class="a" style="left:893px;top:445px;width:18px;height:18px;background:#eeeeee;"></div>
<div class="a" style="left:910px;top:132px;width:1px;height:331px;background:#eeeeee;"></div>
<div class="a" style="left:894px;top:132px;width:16px;height:313px;background:#eeeeee;"></div>
<div class="a" style="left:894px;top:132px;width:1px;height:313px;background:#7a8a99;"></div>
<div class="a" style="left:909px;top:132px;width:1px;height:313px;background:#7a8a99;"></div>
<div class="a" style="left:894px;top:132px;width:16px;height:1px;background:#7a8a99;"></div>
<div class="a" style="left:894px;top:147px;width:16px;height:1px;background:#7a8a99;"></div>
<div class="a" style="left:895px;top:133px;width:14px;height:1px;background:#fff;"></div>
<div class="a" style="left:895px;top:133px;width:1px;height:14px;background:#fff;"></div>
<svg class="a" style="left:899px;top:138px" width="8" height="4" shape-rendering="crispEdges"><path d="M3,0h2v1h-2zM2,1h4v1h-4zM1,2h6v1h-6zM0,3h8v1h-8z" fill="#333"/></svg>
<div class="a" style="left:894px;top:429px;width:16px;height:1px;background:#7a8a99;"></div>
<div class="a" style="left:894px;top:444px;width:16px;height:1px;background:#7a8a99;"></div>
<div class="a" style="left:895px;top:430px;width:14px;height:1px;background:#fff;"></div>
<div class="a" style="left:895px;top:430px;width:1px;height:14px;background:#fff;"></div>
<svg class="a" style="left:899px;top:435px" width="8" height="4" shape-rendering="crispEdges"><path d="M0,0h8v1h-8zM1,1h6v1h-6zM2,2h4v1h-4zM3,3h2v1h-2z" fill="#333"/></svg>
<div class="a" style="left:333px;top:446px;width:560px;height:16px;background:#eeeeee;"></div>
<div class="a" style="left:333px;top:446px;width:560px;height:1px;background:#7a8a99;"></div>
<div class="a" style="left:333px;top:461px;width:560px;height:1px;background:#7a8a99;"></div>
<div class="a" style="left:349px;top:447px;width:527px;height:1px;background:#d3dde8;"></div>
<div class="a" style="left:333px;top:446px;width:1px;height:16px;background:#7a8a99;"></div>
<div class="a" style="left:348px;top:446px;width:1px;height:16px;background:#7a8a99;"></div>
<div class="a" style="left:334px;top:447px;width:14px;height:1px;background:#fff;"></div>
<div class="a" style="left:334px;top:447px;width:1px;height:14px;background:#fff;"></div>
<svg class="a" style="left:339px;top:451px" width="4" height="8" shape-rendering="crispEdges"><path d="M3,0h1v8h-1zM2,1h1v6h-1zM1,2h1v4h-1zM0,3h1v2h-1z" fill="#333"/></svg>
<div class="a" style="left:877px;top:446px;width:1px;height:16px;background:#7a8a99;"></div>
<div class="a" style="left:892px;top:446px;width:1px;height:16px;background:#7a8a99;"></div>
<div class="a" style="left:878px;top:447px;width:14px;height:1px;background:#fff;"></div>
<div class="a" style="left:878px;top:447px;width:1px;height:14px;background:#fff;"></div>
<svg class="a" style="left:883px;top:451px" width="4" height="8" shape-rendering="crispEdges"><path d="M0,0h1v8h-1zM1,1h1v6h-1zM2,2h1v4h-1zM3,3h1v2h-1z" fill="#333"/></svg>
<div class="a" style="left:348px;top:446px;width:348px;height:16px;border:1px solid #6382bf;background:linear-gradient(to bottom,#dde8f3 0%,#ffffff 30%,#dde8f3 60%,#b8cfe5 100%)"></div>
<div class="a" style="left:349px;top:447px;width:346px;height:1px;background:#fff;opacity:.7"></div>
<div class="a" style="left:349px;top:447px;width:1px;height:14px;background:#fff;opacity:.7"></div>
<div class="a" style="left:519px;top:450px;width:1px;height:9px;background:#6382bf;"></div>
<div class="a" style="left:520px;top:451px;width:1px;height:9px;background:#fff;"></div>
<div class="a" style="left:521px;top:450px;width:1px;height:9px;background:#6382bf;"></div>
<div class="a" style="left:522px;top:451px;width:1px;height:9px;background:#fff;"></div>
<div class="a" style="left:523px;top:450px;width:1px;height:9px;background:#6382bf;"></div>
<div class="a" style="left:524px;top:451px;width:1px;height:9px;background:#fff;"></div>
<div class="a" style="left:333px;top:462px;width:560px;height:1px;background:#b8cfe5;"></div>
<div class="a" style="left:318px;top:469px;width:595px;height:20px;border:1px solid #b8cfe5;background:#eeeeee"></div>
<div class="t" style="left:320px;top:472px;letter-spacing:0.4px">name</div>
<div class="btn" style="left:698px;top:527px;width:75px;height:26px;line-height:24px;border:2px solid #7a8a99;line-height:22px"><u>O</u>K</div>
<div class="btn" style="left:777px;top:527px;width:75px;height:26px;line-height:24px;"><u>C</u>ancel</div>
<div class="btn" style="left:856px;top:527px;width:75px;height:26px;line-height:24px;letter-spacing:-0.3px"><u>A</u>pply</div>
<svg class="a" style="left:19px;top:541px" width="16" height="16" viewBox="0 0 16 16">
<defs><clipPath id="lc"><circle cx="8" cy="8" r="7"/></clipPath>
<radialGradient id="lr" cx="8" cy="8" r="7" gradientUnits="userSpaceOnUse"><stop offset="0.45" stop-color="#c93a3a"/><stop offset="0.7" stop-color="#f07878"/><stop offset="1" stop-color="#d84444"/></radialGradient></defs>
<rect x="0.4" y="0.4" width="15.2" height="15.2" rx="2.6" fill="none" stroke="#cdb77a" stroke-width="0.7"/>
<circle cx="8" cy="8" r="7" fill="url(#lr)"/>
<g clip-path="url(#lc)"><line x1="9.73" y1="10.51" x2="12.70" y2="13.48" stroke="#8d9999" stroke-width="0.9"/><line x1="5.49" y1="9.73" x2="2.52" y2="12.70" stroke="#8d9999" stroke-width="0.9"/><line x1="6.27" y1="5.49" x2="3.30" y2="2.52" stroke="#8d9999" stroke-width="0.9"/><line x1="10.51" y1="6.27" x2="13.48" y2="3.30" stroke="#8d9999" stroke-width="0.9"/><line x1="10.12" y1="10.12" x2="13.09" y2="13.09" stroke="#f8fbfb" stroke-width="1.5"/><line x1="5.88" y1="10.12" x2="2.91" y2="13.09" stroke="#f8fbfb" stroke-width="1.5"/><line x1="5.88" y1="5.88" x2="2.91" y2="2.91" stroke="#f8fbfb" stroke-width="1.5"/><line x1="10.12" y1="5.88" x2="13.09" y2="2.91" stroke="#f8fbfb" stroke-width="1.5"/></g>
<line x1="1" y1="1" x2="3" y2="3" stroke="#eef2f2" stroke-width="1.3"/><line x1="15" y1="1" x2="13" y2="3" stroke="#eef2f2" stroke-width="1.3"/><line x1="1" y1="15" x2="3" y2="13" stroke="#eef2f2" stroke-width="1.3"/><line x1="15" y1="15" x2="13" y2="13" stroke="#eef2f2" stroke-width="1.3"/>
<circle cx="8" cy="8" r="2.75" fill="#eeeeee" stroke="#e3eaea" stroke-width="0.9"/>
</svg>
</body></html>
